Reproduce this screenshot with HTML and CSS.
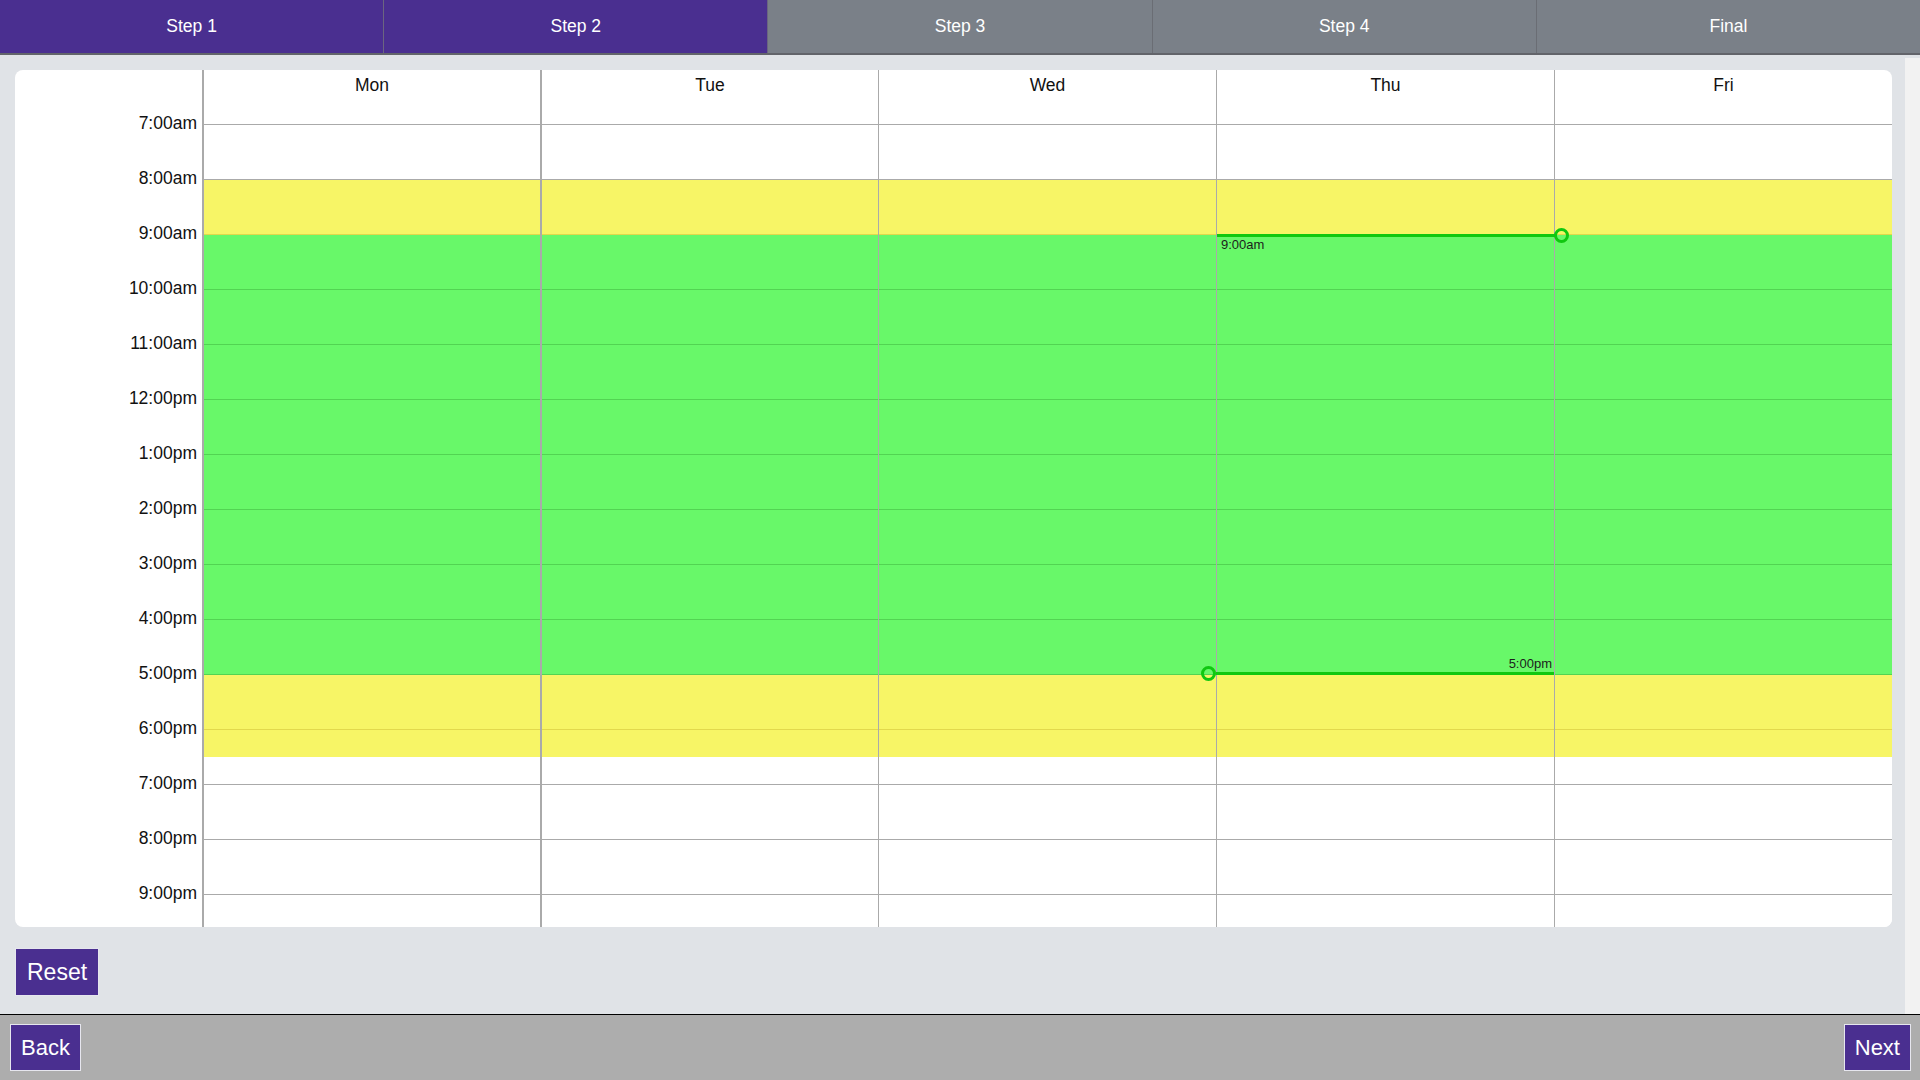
FILE: index.html
```html
<!DOCTYPE html>
<html lang="en">
<head>
<meta charset="utf-8">
<title>Schedule</title>
<link rel="stylesheet" href="styles.css">
</head>
<body>
<div class="app">
  <nav class="steps">
    <div class="step done">Step 1</div>
    <div class="step done">Step 2</div>
    <div class="step">Step 3</div>
    <div class="step">Step 4</div>
    <div class="step last">Final</div>
  </nav>
  <div class="middle">
    <main class="content">
      <section class="card">
        <div class="times">
          <div class="time-spacer"></div>
          <div class="time">7:00am</div>
          <div class="time">8:00am</div>
          <div class="time">9:00am</div>
          <div class="time">10:00am</div>
          <div class="time">11:00am</div>
          <div class="time">12:00pm</div>
          <div class="time">1:00pm</div>
          <div class="time">2:00pm</div>
          <div class="time">3:00pm</div>
          <div class="time">4:00pm</div>
          <div class="time">5:00pm</div>
          <div class="time">6:00pm</div>
          <div class="time">7:00pm</div>
          <div class="time">8:00pm</div>
          <div class="time">9:00pm</div>
        </div>
        <div class="day thick">
          <div class="day-head">Mon</div>
          <div class="cell"></div><div class="cell y"></div><div class="cell g"></div><div class="cell g"></div><div class="cell g"></div><div class="cell g"></div><div class="cell g"></div><div class="cell g"></div><div class="cell g"></div><div class="cell g"></div><div class="cell y"></div><div class="cell yh"></div><div class="cell"></div><div class="cell"></div><div class="cell"></div>
        </div>
        <div class="day thick">
          <div class="day-head">Tue</div>
          <div class="cell"></div><div class="cell y"></div><div class="cell g"></div><div class="cell g"></div><div class="cell g"></div><div class="cell g"></div><div class="cell g"></div><div class="cell g"></div><div class="cell g"></div><div class="cell g"></div><div class="cell y"></div><div class="cell yh"></div><div class="cell"></div><div class="cell"></div><div class="cell"></div>
        </div>
        <div class="day">
          <div class="day-head">Wed</div>
          <div class="cell"></div><div class="cell y"></div><div class="cell g"></div><div class="cell g"></div><div class="cell g"></div><div class="cell g"></div><div class="cell g"></div><div class="cell g"></div><div class="cell g"></div><div class="cell g"></div><div class="cell y"></div><div class="cell yh"></div><div class="cell"></div><div class="cell"></div><div class="cell"></div>
        </div>
        <div class="day active">
          <div class="day-head">Thu</div>
          <div class="cell"></div><div class="cell y"></div><div class="cell g"></div><div class="cell g"></div><div class="cell g"></div><div class="cell g"></div><div class="cell g"></div><div class="cell g"></div><div class="cell g"></div><div class="cell g"></div><div class="cell y"></div><div class="cell yh"></div><div class="cell"></div><div class="cell"></div><div class="cell"></div>
          <div class="handle handle-start"><span class="handle-line"></span><span class="handle-ring"></span></div>
          <div class="handle-label label-start">9:00am</div>
          <div class="handle handle-end"><span class="handle-ring"></span><span class="handle-line"></span></div>
          <div class="handle-label label-end">5:00pm</div>
        </div>
        <div class="day">
          <div class="day-head">Fri</div>
          <div class="cell"></div><div class="cell y"></div><div class="cell g"></div><div class="cell g"></div><div class="cell g"></div><div class="cell g"></div><div class="cell g"></div><div class="cell g"></div><div class="cell g"></div><div class="cell g"></div><div class="cell y"></div><div class="cell yh"></div><div class="cell"></div><div class="cell"></div><div class="cell"></div>
        </div>
      </section>
      <div class="actions">
        <button class="btn btn-reset" type="button">Reset</button>
      </div>
    </main>
    <div class="scroll-track"></div>
  </div>
  <footer class="footer">
    <button class="btn" type="button">Back</button>
    <button class="btn" type="button">Next</button>
  </footer>
</div>
</body>
</html>
```
FILE: styles.css
```css
* {
  box-sizing: border-box;
}

html, body {
  margin: 0;
  padding: 0;
  height: 100%;
}

body {
  font-family: "Liberation Sans", Arial, Helvetica, sans-serif;
  color: #222;
  background: #e0e3e7;
  overflow: hidden;
}

.app {
  display: flex;
  flex-direction: column;
  height: 100vh;
}

/* Step tabs */
.steps {
  display: flex;
  height: 55px;
  flex: 0 0 55px;
  border-bottom: 2px solid #62646a;
}

.step {
  flex: 1 1 0;
  display: flex;
  align-items: center;
  justify-content: center;
  background: #7a8088;
  color: #fff;
  font-size: 17.5px;
  border-right: 1px solid #6a6d74;
}

.step.done {
  background: #4a2f90;
  border-right-color: #6b6580;
}

.step.last {
  border-right: 0;
}

/* Middle area */
.middle {
  flex: 1 1 auto;
  display: flex;
  min-height: 0;
}

.content {
  flex: 1 1 auto;
  padding: 15px 13px 0 15px;
  min-width: 0;
}

.scroll-track {
  flex: 0 0 15px;
  margin-top: 3px;
  background: #f2f2f2;
}

/* Calendar card */
.card {
  display: grid;
  grid-template-columns: 187px repeat(5, 1fr);
  height: 857px;
  background: #fff;
  border-radius: 8px;
  overflow: hidden;
}

.times {
  display: flex;
  flex-direction: column;
  padding-right: 5px;
}

.time-spacer {
  flex: 0 0 42px;
}

.time {
  flex: 0 0 55px;
  text-align: right;
  font-size: 17.5px;
  line-height: 22px;
  color: #111;
}

.day {
  position: relative;
  display: flex;
  flex-direction: column;
  border-left: 1px solid #aaa;
}

.day.thick {
  border-left-width: 2px;
}

.day-head {
  flex: 0 0 55px;
  padding-top: 4px;
  text-align: center;
  font-size: 17.5px;
  line-height: 22px;
  color: #111;
  border-bottom: 1px solid #aaa;
}

.cell {
  flex: 0 0 55px;
  background: #fff;
  border-bottom: 1px solid #aaa;
}

.cell.y {
  background: #f7f566;
  border-bottom-color: #e2d84c;
}

.cell.g {
  background: #68f869;
  border-bottom-color: #52d452;
}

.cell.yh {
  background: linear-gradient(to bottom, #f7f566 0, #f7f566 27px, #fff 27px, #fff 100%);
}

/* Drag handles on the active day */
.handle {
  position: absolute;
  display: flex;
  align-items: center;
  height: 14px;
  z-index: 2;
}

.handle-start {
  top: 158px;
  left: 0;
}

.handle-end {
  top: 596px;
  left: -15px;
}

.handle-line {
  display: block;
  height: 3px;
  width: 338px;
  background: #10c810;
}

.handle-ring {
  display: block;
  width: 15px;
  height: 15px;
  border: 3px solid #10c810;
  border-radius: 50%;
  flex: 0 0 15px;
}

.handle-start .handle-ring {
  margin-left: -1px;
}

.handle-end .handle-ring {
  margin-left: -1px;
}

.handle-label {
  position: absolute;
  z-index: 2;
  font-size: 13px;
  line-height: 15px;
  color: #1c1c1c;
}

.label-start {
  top: 167px;
  left: 4px;
}

.label-end {
  top: 586px;
  right: 2px;
}

/* Buttons */
.actions {
  padding-top: 21px;
}

.btn {
  font-family: "Liberation Sans", Arial, Helvetica, sans-serif;
  font-size: 22px;
  line-height: 25px;
  padding: 10px 10px;
  color: #fff;
  background: #4a2f90;
  border: 1px solid #e6e6ee;
  border-radius: 0;
  cursor: pointer;
}

.btn-reset {
  font-size: 23px;
  line-height: 26px;
  padding: 10px 11px;
}

.footer {
  flex: 0 0 66px;
  display: flex;
  align-items: center;
  justify-content: space-between;
  padding: 0 9px 0 10px;
  background: #adadad;
  border-top: 1px solid #000;
}
```
